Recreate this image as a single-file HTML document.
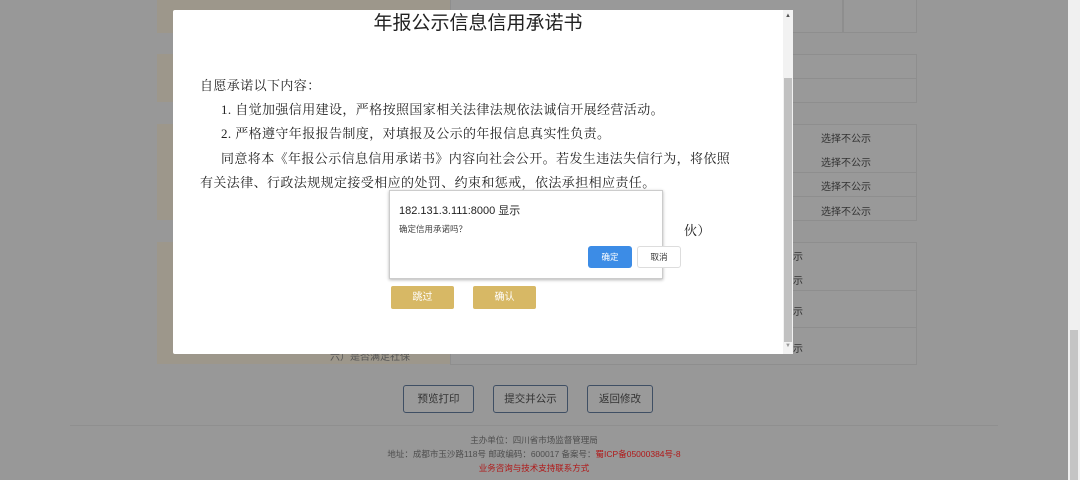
<!DOCTYPE html>
<html style="background:#989898"><head><meta charset="utf-8"><style>
*{margin:0;padding:0;box-sizing:border-box}
body{width:1080px;height:485px;overflow:hidden;background:#989898;position:relative;font-family:"Liberation Sans","Noto Sans CJK SC",sans-serif}
.a{position:absolute}
.tan{background:#9d978b}
.cell{border:1px solid #8e8e8e;background:#999}
.t{font-size:11px;color:#333;white-space:nowrap}
.bb{position:absolute;border:1px solid #3f4f64;border-radius:3px;background:#9a9a9a;font-size:10.5px;color:#333;text-align:center;line-height:26px}
.f{position:absolute;left:0;width:1068px;text-align:center;font-size:8.5px;color:#4e4e4e}
.m{font-family:"Liberation Serif","Noto Serif CJK SC",serif;font-size:13px;color:#222;position:absolute;white-space:nowrap;letter-spacing:0.4px}
.g{position:absolute;background:#d7b865;color:#fff;font-size:10px;text-align:center;line-height:23px;border-radius:2px}
</style></head><body>
<div class="a" style="left:0;top:0;width:1080px;height:485px;background:#989898"></div>
<div class="a tan" style="left:157px;top:0;width:293px;height:33px"></div>
<div class="a cell" style="left:450px;top:-1px;width:393px;height:34px"></div>
<div class="a cell" style="left:843px;top:-1px;width:74px;height:34px"></div>
<div class="a tan" style="left:157px;top:54px;width:293px;height:48px"></div>
<div class="a cell" style="left:450px;top:54px;width:467px;height:25px"></div>
<div class="a cell" style="left:450px;top:78px;width:467px;height:25px"></div>
<div class="a tan" style="left:157px;top:124px;width:293px;height:96px"></div>
<div class="a cell" style="left:450px;top:124px;width:467px;height:49px"></div>
<div class="a cell" style="left:450px;top:172px;width:467px;height:25px"></div>
<div class="a cell" style="left:450px;top:196px;width:467px;height:25px"></div>
<div class="a t" style="left:821px;top:130px;font-size:10px">选择不公示</div>
<div class="a t" style="left:821px;top:154px;font-size:10px">选择不公示</div>
<div class="a t" style="left:821px;top:178px;font-size:10px">选择不公示</div>
<div class="a t" style="left:821px;top:203px;font-size:10px">选择不公示</div>
<div class="a tan" style="left:157px;top:242px;width:293px;height:122px"></div>
<div class="a cell" style="left:450px;top:242px;width:467px;height:49px"></div>
<div class="a cell" style="left:450px;top:290px;width:467px;height:38px"></div>
<div class="a cell" style="left:450px;top:327px;width:467px;height:38px"></div>
<div class="a t" style="left:793px;top:248px;font-size:10px">示</div>
<div class="a t" style="left:793px;top:272px;font-size:10px">示</div>
<div class="a t" style="left:793px;top:303px;font-size:10px">示</div>
<div class="a t" style="left:793px;top:340px;font-size:10px">示</div>
<div class="a t" style="left:330px;top:348px;color:#555;font-size:10px">六）是否满足社保</div>
<div class="a" style="left:70px;top:425px;width:928px;height:1px;background:#8f8f8f"></div>
<div class="bb" style="left:403px;top:385px;width:71px;height:28px">预览打印</div>
<div class="bb" style="left:493px;top:385px;width:75px;height:28px">提交并公示</div>
<div class="bb" style="left:587px;top:385px;width:66px;height:28px">返回修改</div>
<div class="f" style="top:434px">主办单位：四川省市场监督管理局</div>
<div class="f" style="top:448px">地址：成都市玉沙路118号 邮政编码：600017 备案号：<span style="color:#b01818">蜀ICP备05000384号-8</span></div>
<div class="f" style="top:462px;color:#b01818">业务咨询与技术支持联系方式</div>
<div class="a" style="left:0;top:480px;width:1080px;height:5px;background:#fff"></div>
<div class="a" style="left:1068px;top:0;width:12px;height:480px;background:#f0f0f0"></div>
<div class="a" style="left:1070px;top:330px;width:8px;height:150px;background:#c4c4c4"></div>
<div class="a" style="left:173px;top:10px;width:620px;height:344px;background:#fff;border-radius:2px"></div>
<div class="a" style="left:783px;top:10px;width:10px;height:344px;background:#f2f2f2"></div>
<div class="a" style="left:784px;top:78px;width:8px;height:264px;background:#c1c1c1"></div>
<div class="a" style="left:785px;top:13px;font-size:6px;color:#555">▲</div>
<div class="a" style="left:785px;top:343px;font-size:6px;color:#999">▼</div>
<div class="a" style="left:173px;top:8px;width:610px;text-align:center;font-size:19px;color:#222">年报公示信息信用承诺书</div>
<div class="m" style="left:200px;top:75px">自愿承诺以下内容：</div>
<div class="m" style="left:221px;top:99px">1. 自觉加强信用建设，严格按照国家相关法律法规依法诚信开展经营活动。</div>
<div class="m" style="left:221px;top:123px">2. 严格遵守年报报告制度，对填报及公示的年报信息真实性负责。</div>
<div class="m" style="left:221px;top:148px">同意将本《年报公示信息信用承诺书》内容向社会公开。若发生违法失信行为，将依照</div>
<div class="m" style="left:200px;top:172px">有关法律、行政法规规定接受相应的处罚、约束和惩戒，依法承担相应责任。</div>
<div class="m" style="left:684px;top:220px">伙）</div>
<div class="g" style="left:391px;top:286px;width:63px">跳过</div>
<div class="g" style="left:473px;top:286px;width:63px">确认</div>
<div class="a" style="left:389px;top:190px;width:274px;height:89px;background:#fff;border:1px solid #ccc;box-shadow:0 1px 3px rgba(0,0,0,.3)"></div>
<div class="a" style="left:399px;top:202px;font-size:11px;color:#222">182.131.3.111:8000 显示</div>
<div class="a" style="left:399px;top:223px;font-size:8.5px;color:#444">确定信用承诺吗？</div>
<div class="a" style="left:588px;top:246px;width:44px;height:22px;background:#3c8ce6;border-radius:3px;color:#fff;font-size:8.5px;text-align:center;line-height:22px">确定</div>
<div class="a" style="left:637px;top:246px;width:44px;height:22px;background:#fff;border:1px solid #ddd;border-radius:3px;color:#333;font-size:8.5px;text-align:center;line-height:20px">取消</div>
</body></html>
